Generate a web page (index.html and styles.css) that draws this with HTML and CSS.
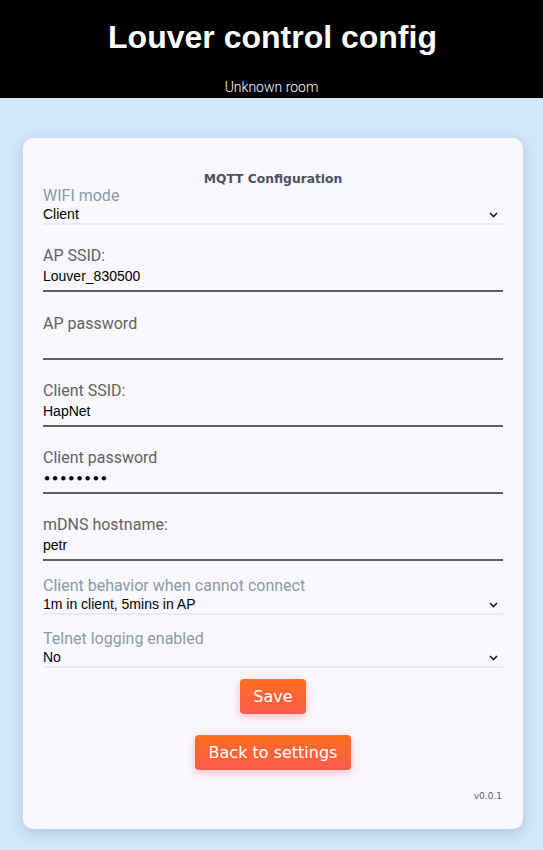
FILE: index.html
```html
<!DOCTYPE html>
<html>
<head>
<meta charset="utf-8">
<title>Louver control config</title>
<link rel="stylesheet" href="styles.css">
</head>
<body>
<header class="top">
  <h1 class="title">Louver control config</h1>
  <div class="room">Unknown room</div>
</header>
<main class="card">
  <div class="card-title">MQTT Configuration</div>
  <form class="form">
    <div class="sfield first">
      <label class="slabel">WIFI mode</label>
      <div class="swrap">
        <select class="select"><option>Client</option><option>AP</option></select>
        <svg class="chev" width="9" height="6" viewBox="0 0 9 6"><path d="M1 1 L4.5 4.5 L8 1" fill="none" stroke="#1e1e1e" stroke-width="1.6"/></svg>
      </div>
    </div>
    <div class="field">
      <label class="label">AP SSID:</label>
      <input class="input" type="text" value="Louver_830500">
    </div>
    <div class="field">
      <label class="label">AP password</label>
      <input class="input pass" type="password" value="">
    </div>
    <div class="field">
      <label class="label">Client SSID:</label>
      <input class="input" type="text" value="HapNet">
    </div>
    <div class="field">
      <label class="label">Client password</label>
      <input class="input pass" type="password" value="abcdefgh">
    </div>
    <div class="field">
      <label class="label">mDNS hostname:</label>
      <input class="input" type="text" value="petr">
    </div>
    <div class="sfield">
      <label class="slabel">Client behavior when cannot connect</label>
      <div class="swrap">
        <select class="select"><option>1m in client, 5mins in AP</option></select>
        <svg class="chev" width="9" height="6" viewBox="0 0 9 6"><path d="M1 1 L4.5 4.5 L8 1" fill="none" stroke="#1e1e1e" stroke-width="1.6"/></svg>
      </div>
    </div>
    <div class="sfield">
      <label class="slabel">Telnet logging enabled</label>
      <div class="swrap">
        <select class="select"><option>No</option><option>Yes</option></select>
        <svg class="chev" width="9" height="6" viewBox="0 0 9 6"><path d="M1 1 L4.5 4.5 L8 1" fill="none" stroke="#1e1e1e" stroke-width="1.6"/></svg>
      </div>
    </div>
    <div class="actions">
      <button type="button" class="btn">Save</button>
      <button type="button" class="btn back">Back to settings</button>
    </div>
  </form>
  <div class="version">v0.0.1</div>
</main>
</body>
</html>
```
FILE: styles.css
```css
html, body {
  margin: 0;
  padding: 0;
}
body {
  background: #d3e8fb;
  font-family: Roboto, "Liberation Sans", sans-serif;
  min-height: 850px;
}
.top {
  background: #000;
  color: #fff;
  text-align: center;
  height: 98px;
  box-sizing: border-box;
  padding-top: 19px;
}
.title {
  margin: 0;
  font-family: "Liberation Sans", Arial, sans-serif;
  font-weight: bold;
  font-size: 32px;
  line-height: 37px;
  padding-left: 2px;
}
.room {
  margin-top: 23px;
  font-family: Roboto, sans-serif;
  font-size: 14px;
  line-height: 16px;
  font-weight: 300;
}
.card {
  width: 500px;
  box-sizing: border-box;
  margin: 40px 0 0 23px;
  background: #f9f8fe;
  border-radius: 10px;
  padding: 33px 20px 27px 20px;
  box-shadow: 0 4px 16px rgba(40, 70, 110, 0.22);
}
.card-title {
  text-align: center;
  font-family: "DejaVu Sans", Verdana, sans-serif;
  font-weight: bold;
  font-size: 12.3px;
  line-height: 16px;
  color: #4b5163;
}
.form {
  margin: 0;
}
.field {
  margin-top: 22.25px;
  display: flex;
  flex-direction: column;
}
.sfield {
  margin-top: 15.5px;
  display: flex;
  flex-direction: column;
}
.sfield.first {
  margin-top: 0;
}
.label, .slabel {
  display: block;
  font-family: Roboto, sans-serif;
  font-size: 16px;
  line-height: 18px;
}
.label {
  color: #6b5e5e;
}
.slabel {
  color: #8b9ba7;
}
.input {
  box-sizing: border-box;
  width: 100%;
  height: 27px;
  margin: 0;
  padding: 0 0 3px 0;
  border: none;
  border-bottom: 2px solid #675c5c;
  background: transparent;
  font-family: "Liberation Sans", Arial, sans-serif;
  font-size: 14px;
  color: #000;
  outline: none;
}
.input.pass {
  font-family: "DejaVu Sans", sans-serif;
  font-weight: bold;
  font-size: 12.7px;
  padding-bottom: 2px;
}
.swrap {
  position: relative;
}
.select {
  -webkit-appearance: none;
  appearance: none;
  box-sizing: border-box;
  display: block;
  width: 100%;
  height: 20px;
  margin: 0;
  padding: 1px 0 0 0;
  border: none;
  border-radius: 0;
  border-bottom: 2px solid #ebebeb;
  background: transparent;
  font-family: "Liberation Sans", Arial, sans-serif;
  font-size: 14px;
  line-height: 17px;
  color: #000;
  outline: none;
}
.chev {
  position: absolute;
  right: 5px;
  top: 7px;
  pointer-events: none;
}
.actions {
  display: flex;
  flex-direction: column;
  align-items: center;
  gap: 21px;
  margin-top: 11px;
}
.btn {
  font-family: "DejaVu Sans", Verdana, sans-serif;
  font-size: 16px;
  line-height: 19px;
  color: #fff;
  border: none;
  border-radius: 4px;
  padding: 8px 13.5px;
  background: linear-gradient(to bottom, #ff6d1e, #ff5c4c);
  box-shadow: 0 3px 10px rgba(255, 90, 90, 0.35);
  cursor: pointer;
}
.version {
  margin-top: 21px;
  text-align: right;
  padding-right: 1px;
  font-family: "DejaVu Sans", Verdana, sans-serif;
  font-size: 9px;
  line-height: 11px;
  color: #555c6c;
}
```
